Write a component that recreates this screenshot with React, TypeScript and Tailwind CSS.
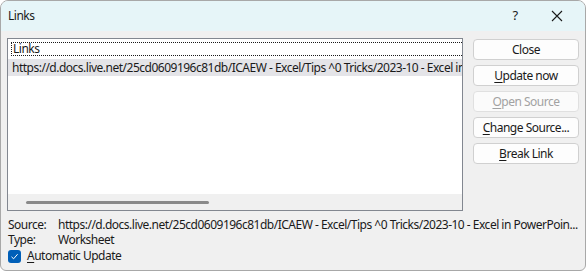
import React from 'react';

const url =
  'https://d.docs.live.net/25cd0609196c81db/ICAEW - Excel/Tips ^0 Tricks/2023-10 - Excel in PowerPoint.xlsx!Sheet1!R1C1:R20C8';

const Btn: React.FC<{ label: string; hot?: number; disabled?: boolean }> = ({ label, hot, disabled }) => (
  <div
    className={`h-[21px] w-[106px] rounded-[4px] border flex items-center justify-center leading-none whitespace-nowrap ${
      disabled ? 'border-[#e0e0e0] bg-[#fbfbfb] text-[#a2a2a2]' : 'border-[#d0d0d0] bg-[#fdfdfd] text-[#1a1a1a]'
    }`}
  >
    {hot === undefined ? (
      label
    ) : (
      <span>
        {label.slice(0, hot)}
        <span className="underline underline-offset-2">{label[hot]}</span>
        {label.slice(hot + 1)}
      </span>
    )}
  </div>
);

export default function App() {
  return (
    <div className="w-[586px] h-[271px] bg-white font-['Noto_Sans',sans-serif] text-[12px] tracking-[-0.5px] text-[#1a1a1a]">
      <div className="w-[586px] h-[271px] border border-[#a8a8a8] rounded-t-[8px] rounded-b-[6px] overflow-hidden flex flex-col bg-[#f0f0f0]">
        {/* title bar */}
        <div className="h-[30px] bg-[#e6f5f8] flex items-center pl-[7px] shrink-0">
          <span className="text-[12px]">Links</span>
          <span className="ml-auto w-[20px] text-center text-[13px] mr-[26px]">?</span>
          <svg width="12" height="12" viewBox="0 0 12 12" className="mr-[22px]">
            <path d="M1 1 L11 11 M11 1 L1 11" stroke="#1a1a1a" strokeWidth="1.1" />
          </svg>
        </div>

        <div className="flex pl-[6px] pt-[7px]">
          {/* list box */}
          <div className="w-[456px] h-[173px] shrink-0 border border-[#828790] bg-white flex flex-col">
            <div className="flex-1 pt-[3px] pl-[3px] overflow-hidden">
              <div className="h-[14px] border border-dotted border-[#1a1a1a] border-r-0 pl-[1px] flex items-center leading-none">
                Links
              </div>
              <div className="mt-[3px] -ml-[3px] h-[17px] bg-[#e4e4e8] pl-[4px] flex items-center whitespace-nowrap overflow-hidden leading-none">
                {url}
              </div>
            </div>
            <div className="h-[16px] bg-[#f0f0f0] flex items-center pl-[18px]">
              <div className="w-[183px] h-[3px] bg-[#8a8a8a] rounded-full" />
            </div>
          </div>

          {/* buttons */}
          <div className="ml-[10px] mt-[1px] flex flex-col gap-[5px]">
            <Btn label="Close" />
            <Btn label="Update now" hot={0} />
            <Btn label="Open Source" hot={0} disabled />
            <Btn label="Change Source..." hot={0} />
            <Btn label="Break Link" hot={0} />
          </div>
        </div>

        {/* details */}
        <div className="pl-[7px] pt-[6px] flex flex-col">
          <div className="flex h-[15px] items-center whitespace-nowrap">
            <span className="w-[50px] shrink-0">Source:</span>
            <span>https://d.docs.live.net/25cd0609196c81db/ICAEW - Excel/Tips ^0 Tricks/2023-10 - Excel in PowerPoin...</span>
          </div>
          <div className="flex h-[16px] items-center">
            <span className="w-[50px] shrink-0">Type:</span>
            <span>Worksheet</span>
          </div>
          <div className="flex h-[16px] items-center">
            <div className="w-[13px] h-[13px] rounded-[3px] bg-[#005fb8] flex items-center justify-center">
              <svg width="9" height="9" viewBox="0 0 9 9">
                <path d="M1.5 4.8 L3.6 6.8 L7.6 2.2" fill="none" stroke="white" strokeWidth="1" />
              </svg>
            </div>
            <span className="ml-[6px]">
              <span className="underline underline-offset-2">A</span>utomatic Update
            </span>
          </div>
        </div>
      </div>
    </div>
  );
}
